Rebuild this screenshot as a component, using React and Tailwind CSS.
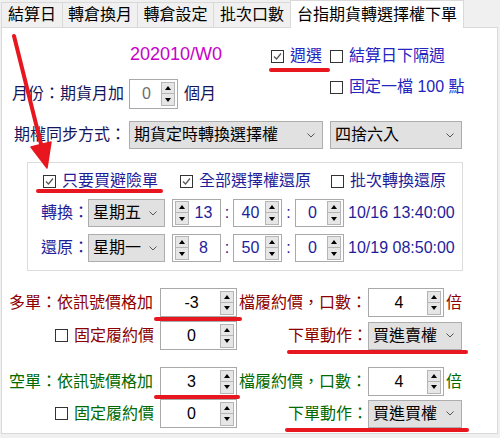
import React from "react";

const Check = ({ checked }) => (
  <span className="w-[13px] h-[13px] border border-[#333333] bg-white flex items-center justify-center shrink-0">
    {checked && (
      <svg width="9" height="9" viewBox="0 0 9 9">
        <path d="M1 4.5 L3.5 7 L8 1.5" fill="none" stroke="#555555" strokeWidth="1.2" />
      </svg>
    )}
  </span>
);

const CheckItem = ({ checked, label, className = "", textClass = "" }) => (
  <div className={`flex items-center ${className}`}>
    <Check checked={checked} />
    <span className={`ml-[6px] whitespace-nowrap ${textClass}`}>{label}</span>
  </div>
);

const Chevron = () => (
  <svg width="8" height="5" viewBox="0 0 8 5" className="shrink-0">
    <path d="M0.5 0.5 L4 4 L7.5 0.5" fill="none" stroke="#555555" strokeWidth="1" />
  </svg>
);

const Select = ({ value, className = "" }) => (
  <div className={`flex items-center justify-between bg-[#e1e1e1] border border-[#adadad] pl-[4px] pr-[7px] shrink-0 ${className}`}>
    <span className="whitespace-nowrap text-black">{value}</span>
    <Chevron />
  </div>
);

const SpinBtns = () => (
  <div className="flex flex-col w-[14px] shrink-0">
    <div className="h-[12px] border border-[#b5b5b5] bg-[#e6e6e6] flex items-center justify-center">
      <svg width="6" height="4" viewBox="0 0 6 4"><path d="M3 0 L6 4 L0 4Z" fill="#000" /></svg>
    </div>
    <div className="h-[12px] border border-[#b5b5b5] border-t-0 bg-[#e6e6e6] flex items-center justify-center">
      <svg width="6" height="4" viewBox="0 0 6 4"><path d="M0 0 L6 0 L3 4Z" fill="#000" /></svg>
    </div>
  </div>
);

const Spin = ({ value, className = "", left = false, valueClass = "text-black" }) => (
  <div className={`flex items-center border border-[#a9a9a9] bg-white px-[2px] shrink-0 ${className}`}>
    {left && <SpinBtns />}
    <span className={`flex-1 text-center ${valueClass}`}>{value}</span>
    {!left && <SpinBtns />}
  </div>
);

const Tab = ({ label, className = "" }) => (
  <div className={`-ml-px first:ml-0 mt-[2px] h-[25px] border border-b-0 border-[#d9d9d9] bg-[#f0f0f0] flex items-center justify-center text-black whitespace-nowrap ${className}`}>
    {label}
  </div>
);

export default function App() {
  const navy = "text-[#15155a]";
  const blue = "text-[#2424c0]";
  const gblue = "text-[#1e1e9a]";
  const red = "text-[#8c0000]";
  const green = "text-[#006a00]";

  return (
    <div className="w-[500px] h-[438px] bg-[#f0f0f0] relative overflow-hidden font-['Liberation_Sans','Noto_Sans_CJK_TC',sans-serif] text-[16px] leading-[20px]">
      {/* Tabs */}
      <div className="relative z-10 flex h-[28px] pl-px items-start">
        <Tab label="結算日" className="w-[62px]" />
        <Tab label="轉倉換月" className="w-[76px]" />
        <Tab label="轉倉設定" className="w-[77px]" />
        <Tab label="批次口數" className="w-[78px]" />
        <div className="-ml-px h-[28px] w-[174px] border border-b-0 border-[#d9d9d9] bg-white flex items-center justify-center text-black whitespace-nowrap">
          台指期貨轉選擇權下單
        </div>
      </div>

      {/* Panel */}
      <div className="-mt-px ml-px w-[497px] h-[407px] bg-white border border-[#d9d9d9] flex flex-col">
        {/* Top area */}
        <div className="flex mt-[18px]">
          <div className="w-[328px] flex flex-col">
            <div className="flex items-center h-[20px] pl-[128px]">
              <span className="w-[141px] text-[18px] text-[#c800c8] mb-[5px]">202010/W0</span>
              <CheckItem checked label="週選" textClass={blue} />
            </div>
            <div className="flex items-center h-[30px] mt-[13px] pl-[10px]">
              <span className={`w-[117px] whitespace-nowrap ${navy}`}>月份：期貨月加</span>
              <Spin value="0" className="w-[49px] h-[30px]" valueClass="text-[#6d6d6d]" />
              <span className={`ml-[6px] ${navy}`}>個月</span>
            </div>
          </div>
          <div className="flex flex-col">
            <CheckItem label="結算日下隔週" textClass={blue} className="h-[20px]" />
            <CheckItem label="固定一檔 100 點" textClass={blue} className="h-[20px] mt-[11px]" />
          </div>
        </div>

        {/* Sync method */}
        <div className="flex items-center h-[28px] mt-[12px] pl-[12px]">
          <span className={`w-[115px] whitespace-nowrap ${navy}`}>期權同步方式：</span>
          <Select value="期貨定時轉換選擇權" className="w-[194px] h-[28px]" />
          <Select value="四捨六入" className="w-[132px] h-[28px] ml-[7px]" />
        </div>

        {/* Group box */}
        <div className="mt-[13px] ml-[25px] w-[436px] h-[109px] border border-[#dcdcdc] flex flex-col">
          <div className="mt-[8px] h-[20px] flex items-center pl-[15px]">
            <CheckItem checked label="只要買避險單" textClass={gblue} className="w-[137px]" />
            <CheckItem checked label="全部選擇權還原" textClass={gblue} className="w-[151px]" />
            <CheckItem label="批次轉換還原" textClass={gblue} />
          </div>
          <div className="mt-[8px] h-[28px] flex items-center pl-[13px]">
            <span className={`w-[47px] whitespace-nowrap ${gblue}`}>轉換：</span>
            <Select value="星期五" className="w-[77px] h-[28px]" />
            <Spin left value="13" className="w-[49px] h-[28px] ml-[7px]" valueClass={gblue} />
            <span className={`w-[12px] text-center ${gblue}`}>:</span>
            <Spin value="40" className="w-[49px] h-[28px]" valueClass={gblue} />
            <span className={`w-[13px] text-center ${gblue}`}>:</span>
            <Spin value="0" className="w-[49px] h-[28px]" valueClass={gblue} />
            <span className={`ml-[4px] whitespace-nowrap ${gblue}`}>10/16 13:40:00</span>
          </div>
          <div className="mt-[7px] h-[28px] flex items-center pl-[13px]">
            <span className={`w-[47px] whitespace-nowrap ${gblue}`}>還原：</span>
            <Select value="星期一" className="w-[77px] h-[28px]" />
            <Spin left value="8" className="w-[49px] h-[28px] ml-[7px]" valueClass={gblue} />
            <span className={`w-[12px] text-center ${gblue}`}>:</span>
            <Spin value="50" className="w-[49px] h-[28px]" valueClass={gblue} />
            <span className={`w-[13px] text-center ${gblue}`}>:</span>
            <Spin value="0" className="w-[49px] h-[28px]" valueClass={gblue} />
            <span className={`ml-[4px] whitespace-nowrap ${gblue}`}>10/19 08:50:00</span>
          </div>
        </div>

        {/* Long */}
        <div className="mt-[17px] h-[29px] flex items-center pl-[7px]">
          <span className={`w-[151px] whitespace-nowrap ${red}`}>多單：依訊號價格加</span>
          <Spin value="-3" className="w-[77px] h-[29px]" />
          <span className={`ml-[2px] w-[129px] whitespace-nowrap ${red}`}>檔履約價，口數：</span>
          <Spin value="4" className="w-[76px] h-[29px]" />
          <span className={`ml-[2px] ${red}`}>倍</span>
        </div>
        <div className="mt-[4px] h-[29px] flex items-center pl-[53px]">
          <CheckItem label="固定履約價" textClass={red} className="w-[105px]" />
          <Spin value="0" className="w-[77px] h-[29px]" />
          <span className={`w-[131px] text-right whitespace-nowrap ${red}`}>下單動作：</span>
          <Select value="買進賣權" className="w-[94px] h-[28px]" />
        </div>

        {/* Short */}
        <div className="mt-[17px] h-[29px] flex items-center pl-[7px]">
          <span className={`w-[151px] whitespace-nowrap ${green}`}>空單：依訊號價格加</span>
          <Spin value="3" className="w-[77px] h-[29px]" />
          <span className={`ml-[2px] w-[129px] whitespace-nowrap ${green}`}>檔履約價，口數：</span>
          <Spin value="4" className="w-[76px] h-[29px]" />
          <span className={`ml-[2px] ${green}`}>倍</span>
        </div>
        <div className="mt-[3px] h-[29px] flex items-center pl-[53px]">
          <CheckItem label="固定履約價" textClass={green} className="w-[105px]" />
          <Spin value="0" className="w-[77px] h-[29px]" />
          <span className={`w-[131px] text-right whitespace-nowrap ${green}`}>下單動作：</span>
          <Select value="買進買權" className="w-[94px] h-[28px]" />
        </div>
      </div>

      {/* Red annotations overlay */}
      <svg className="absolute left-0 top-0 w-[500px] h-[438px] pointer-events-none z-20" viewBox="0 0 500 438">
        <g stroke="#e8161e" strokeWidth="4" strokeLinecap="round" fill="none">
          <line x1="271" y1="70" x2="328" y2="70" />
          <line x1="38" y1="191" x2="161" y2="191" />
          <line x1="156" y1="319" x2="240" y2="319" />
          <line x1="289" y1="352" x2="466" y2="352" />
          <line x1="156" y1="397" x2="238" y2="397" />
          <line x1="287" y1="430" x2="467" y2="430" />
          <line x1="14" y1="36" x2="42" y2="148" />
        </g>
        <path d="M47 168 L31 147 L51 142 Z" fill="#e8161e" stroke="#e8161e" strokeWidth="1.5" strokeLinejoin="round" />
      </svg>
    </div>
  );
}
